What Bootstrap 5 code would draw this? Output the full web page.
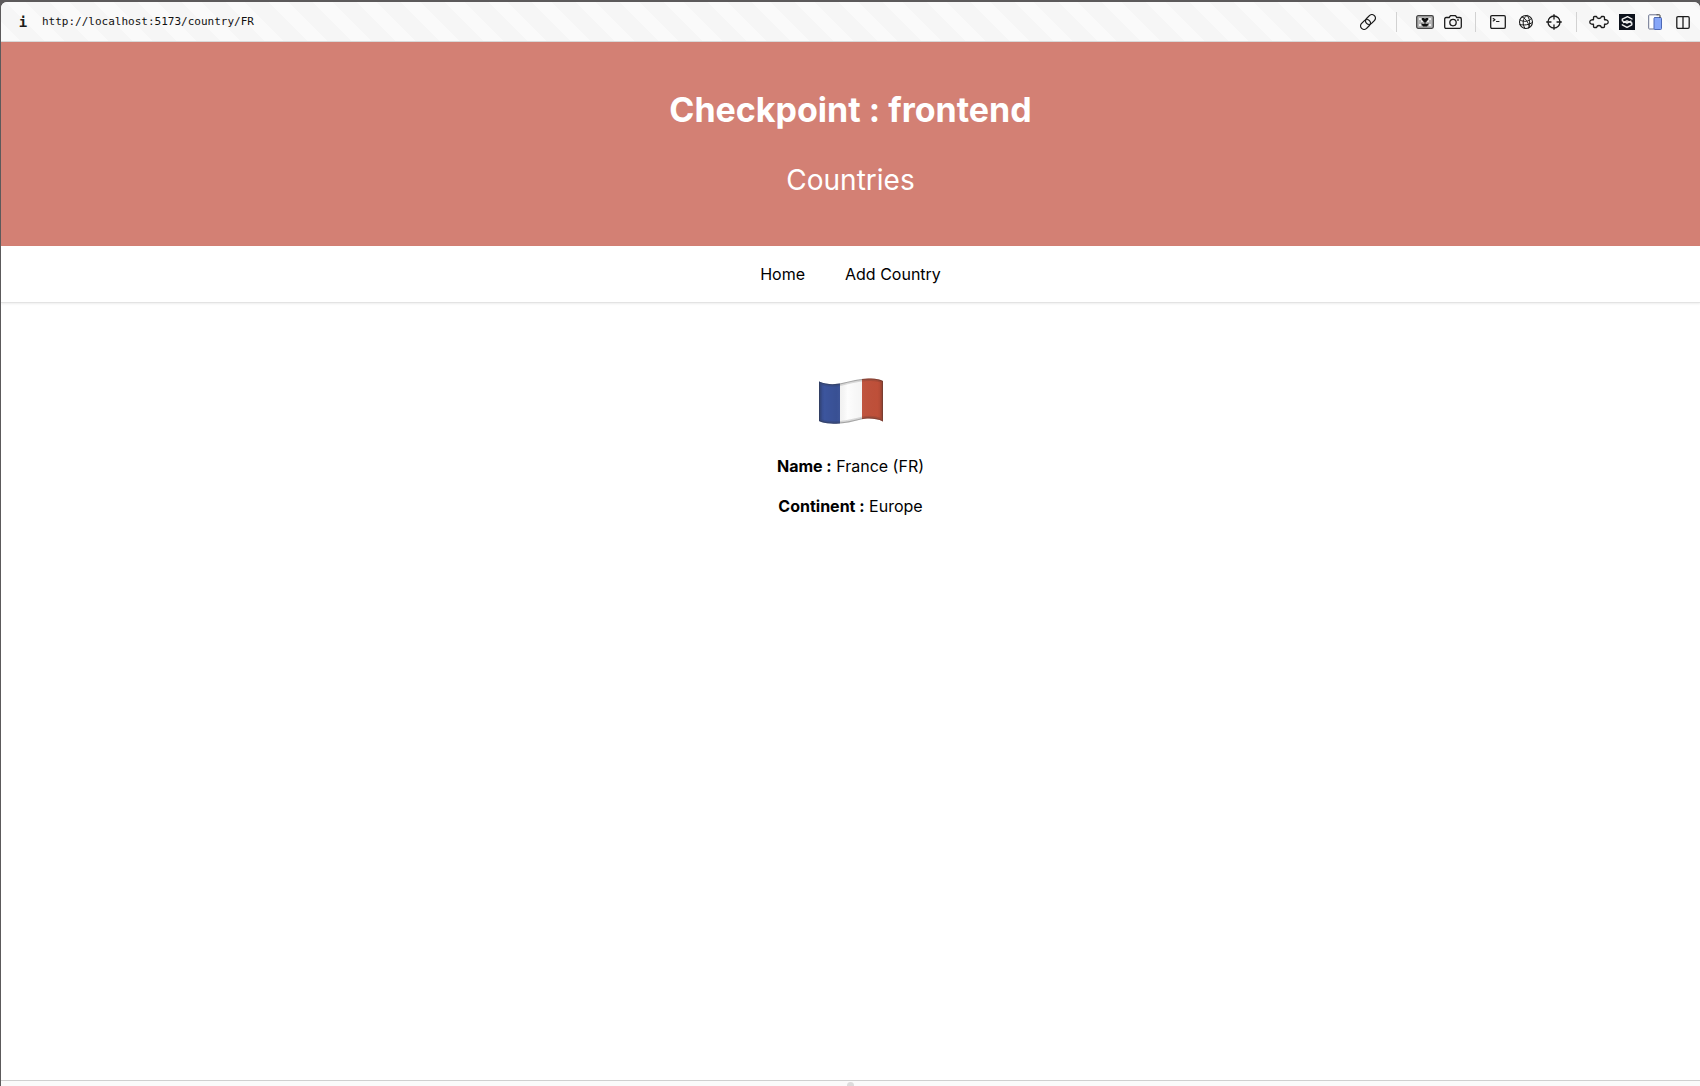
<!DOCTYPE html>
<html lang="en">
<head>
<meta charset="utf-8">
<meta name="viewport" content="width=device-width, initial-scale=1">
<title>Checkpoint : frontend</title>
<link href="https://cdn.jsdelivr.net/npm/bootstrap@5.3.0/dist/css/bootstrap.min.css" rel="stylesheet">
<style>
  body { font-family: Inter, "Liberation Sans", sans-serif; font-size: 16px; line-height: 24px; color: #000; background: #5c5a5b; }
  .window { margin: 2px 0 0 1px; min-height: calc(100vh - 2px); background: #fff; border-radius: 6px 6px 0 0; overflow: hidden; }
  .toolbar { height: 40px; padding: 1px 3px 0 15px; border-bottom: 1px solid #d9d9d9;
    background: repeating-linear-gradient(45deg, #fafafa 0 14px, #f6f6f6 14px 31px); }
  .tool { width: 28px; height: 28px; padding: 0; border: 0; background: none; color: #1c1c1c; }
  .tool svg { display: block; margin: auto; fill: none; stroke: currentColor; stroke-width: 1.3; stroke-linejoin: round; stroke-linecap: round; }
  .divider { width: 1px; height: 20px; margin: 0 8px; background: #d2d2d2; }
  .divider-wide { margin: 0 14px; }
  .address { width: 260px; padding: 0; border: 0; background: none; color: #111; font: 11px/16px "DejaVu Sans Mono", "Liberation Mono", monospace; }
  .info { font: bold 14px/16px "DejaVu Sans Mono", monospace; width: 14px; margin-right: 12px; }
  .banner { background: #d38074; color: #fff; height: 204px; padding-top: 44px; }
  .banner h1 { font-size: 34px; line-height: 48px; font-weight: 700; margin-bottom: 24px; }
  .banner p { font-size: 28px; line-height: 44px; margin: 0; }
  .main-nav { height: 57px; gap: 40px; border-bottom: 1px solid #e3e3e3; box-shadow: 0 1px 2px #00000012; }
  .main-nav a { color: #000; text-decoration: none; }
  .country { padding-top: 75px; }
  .country svg { display: block; margin: 0 auto 30px; }
  .country p { margin-bottom: 16px; }
  .drawer { height: 6px; background: #fafafa; border-top: 1px solid #cfcfcf; overflow: hidden; }
  .grip { width: 7px; height: 7px; margin: 1px auto 0; border-radius: 50%; background: #dcdcdc; }
</style>
<script src="https://cdn.jsdelivr.net/npm/bootstrap@5.3.0/dist/js/bootstrap.bundle.min.js" defer></script>
</head>
<body>
<div class="window d-flex flex-column">
  <div class="toolbar d-flex align-items-center">
    <button class="tool info" aria-label="Site information">i</button>
    <input class="address" type="text" aria-label="Address" value="http://localhost:5173/country/FR">
    <div class="d-flex align-items-center ms-auto">
      <button class="tool" aria-label="Copy link"><svg width="16" height="16" viewBox="0 0 16 16"><g transform="rotate(-45 8 8)"><rect x="-1" y="4.500" width="11" height="7" rx="3.500"/><rect x="6" y="4.500" width="11" height="7" rx="3.500"/></g></svg></button>
      <span class="divider divider-wide"></span>
      <button class="tool" aria-label="Image"><svg width="18" height="14" viewBox="0 0 18 14"><rect x=".7" y=".7" width="16.600" height="12.600" rx="1.500" fill="#b4b4b4" stroke="#444"/><path d="M3 3h2v2H3zM13 3h2v2h-2zM3 9h2v2H3zM13 9h2v2h-2zM5 5h2v2H5zM11 5h2v2h-2z" fill="#eee" stroke="none"/><path d="M6 3h2l1 1 1-1h2v2l-3 3-3-3zM5 8.500l3 .5 1-1 1 1 3-.5-2 3H7z" fill="#111" stroke="none"/></svg></button>
      <button class="tool" aria-label="Screenshot"><svg width="18" height="14" viewBox="0 0 18 14"><path d="M2.200 2.500h3l1.300-1.800h5l1.300 1.800h3q1.500 0 1.500 1.500v7.800q0 1.500-1.500 1.500H2.200Q.7 13.300.7 11.800V4q0-1.500 1.500-1.500z"/><circle cx="9" cy="7.600" r="3.200"/><circle cx="14" cy="5" r=".3"/></svg></button>
      <span class="divider"></span>
      <button class="tool" aria-label="Console"><svg width="16" height="14" viewBox="0 0 16 14"><rect x=".7" y=".7" width="14.600" height="12.600" rx="1.200"/><path d="M3.200 3.500l1.800 1.300L3.200 6M6.500 6.500H9" stroke-width="1.100"/></svg></button>
      <button class="tool" aria-label="Network"><svg width="16" height="16" viewBox="0 0 16 16"><circle cx="8" cy="8" r="6.500" stroke-width="1.100"/><path d="M2 6c4 2.500 9 1.500 11.500-1.500M2 10.500c4 1 9 .5 12.300-2M9 1.500C4.500 4 4 10 7 14.500M9 1.500c3 3 3.500 8 1.500 12.500M4 3c3 1 6 4 7.500 10.500" stroke-width="1"/></svg></button>
      <button class="tool" aria-label="Inspect"><svg width="16" height="16" viewBox="0 0 16 16"><circle cx="8" cy="8" r="6"/><path d="M8 .7v4.300M8 11v4.300M.7 8H5M11 8h4.300"/></svg></button>
      <span class="divider"></span>
      <button class="tool" aria-label="Extensions"><svg width="20" height="14" viewBox="0 0 20 14"><path d="M4.500 4.800V2.500Q4.500 1.500 5.500 1.500H7.500Q8 3.500 10 3.500T12.500 1.500H14.500Q15.500 1.500 15.500 2.500V4.800Q19.200 4.500 19.200 7T15.500 9.200V11.500Q15.500 12.500 14.500 12.500H12.500Q12 10.500 10 10.500T7.500 12.500H5.500Q4.500 12.500 4.500 11.500V9.200Q.8 9.500.8 7T4.500 4.800z"/></svg></button>
      <button class="tool" aria-label="Components"><svg width="16" height="16" viewBox="0 0 16 16"><path d="M0 0h16v16H0z" fill="#0d121c" stroke="none"/><path d="M13 5L8.500 2.600 3.300 5.200v1.600L8 9l4-1.800M3.300 10.800L8 13.400l4.800-2.600V9L8 6.800 4.500 8.500" stroke="#eee" stroke-width="1.400"/></svg></button>
      <button class="tool" aria-label="Device preview"><svg width="14" height="16" viewBox="0 0 14 16"><path d="M9 .8H1.500Q.7.800.7 1.600v12.600q0 .8.8.8H6" fill="#fff" stroke="#68708c" stroke-width="1"/><rect x="6" y="3.500" width="7.500" height="12" rx="1" fill="#86a6f8" stroke="#4e69b5" stroke-width="1"/><path d="M9 .8h2.500q.5 0 .5.700v2" stroke="#333" stroke-width="1"/></svg></button>
      <button class="tool" aria-label="Split view"><svg width="14" height="13" viewBox="0 0 14 13"><rect x=".8" y=".7" width="12.400" height="11.600" rx="1.200"/><path d="M7 .7v11.600"/></svg></button>
    </div>
  </div>

  <header class="banner text-center">
    <h1>Checkpoint : frontend</h1>
    <p>Countries</p>
  </header>
  <nav class="main-nav d-flex justify-content-center align-items-center">
    <a href="#">Home</a>
    <a href="#">Add Country</a>
  </nav>

  <main class="country text-center flex-grow-1">
    <svg width="66" height="46" viewBox="0 0 66 46" role="img" aria-label="Flag of France">
      <defs>
        <clipPath id="wave"><path d="M1 3.500C9 7 18 6.500 24 5 34 2.500 43 0 53 .5Q61 .8 65 3V43.500C58 40 49 40 43 41.500 33 44 24 46.500 13 45.500Q5 45 1 43z"/></clipPath>
        <linearGradient id="shade" x2="1" y2="0"><stop offset="0" stop-color="#000" stop-opacity=".18"/><stop offset=".1" stop-color="#000" stop-opacity="0"/><stop offset=".28" stop-color="#000" stop-opacity=".06"/><stop offset=".45" stop-color="#fff" stop-opacity=".1"/><stop offset=".9" stop-color="#000" stop-opacity=".03"/><stop offset="1" stop-color="#000" stop-opacity=".15"/></linearGradient>
      </defs>
      <g clip-path="url(#wave)">
        <path d="M0 0h22v46H0z" fill="#3c559d"/><path d="M22 0h22v46H22z" fill="#fdfdfd"/><path d="M44 0h22v46H44z" fill="#c4523b"/>
        <path d="M0 0h66v46H0z" fill="url(#shade)"/>
        <path d="M1 3.500C9 7 18 6.500 24 5 34 2.500 43 0 53 .5Q61 .8 65 3V43.500C58 40 49 40 43 41.500 33 44 24 46.500 13 45.500Q5 45 1 43z" fill="none" stroke="#333" stroke-opacity=".16" stroke-width="5"/>
        <path d="M1 3.500C9 7 18 6.500 24 5 34 2.500 43 0 53 .5Q61 .8 65 3V43.500C58 40 49 40 43 41.500 33 44 24 46.500 13 45.500Q5 45 1 43z" fill="none" stroke="#333" stroke-opacity=".3" stroke-width="2"/>
      </g>
    </svg>
    <p><strong>Name :</strong> France (FR)</p>
    <p><strong>Continent :</strong> Europe</p>
  </main>
  <div class="drawer"><div class="grip"></div></div>
</div>
</body>
</html>
